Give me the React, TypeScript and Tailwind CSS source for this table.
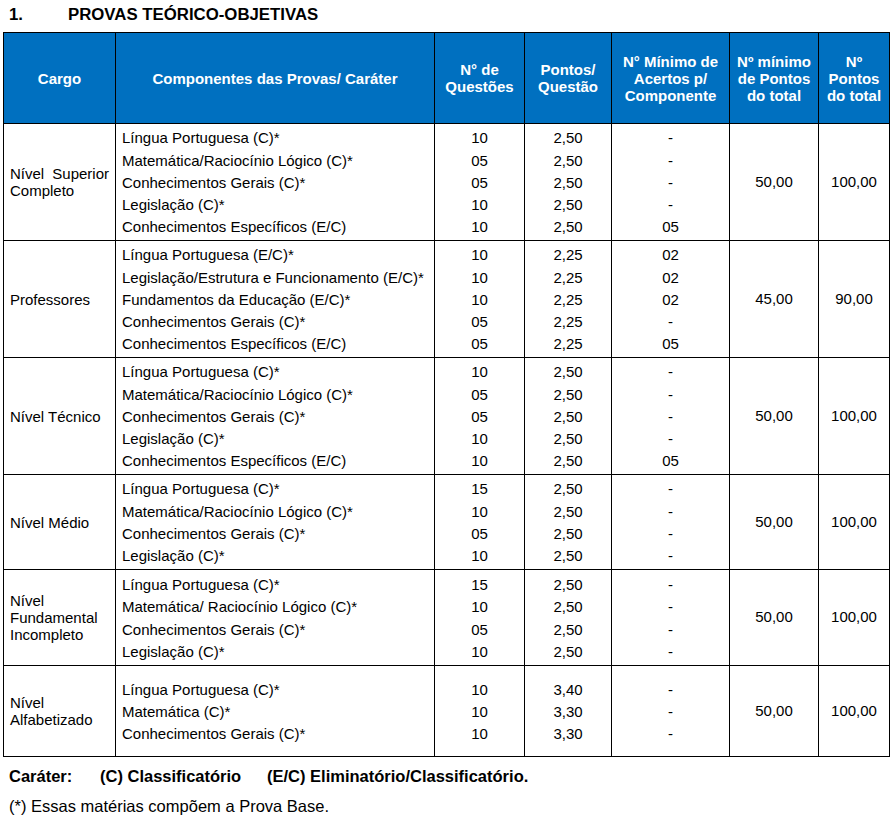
import React from 'react';

type Group = {
  cargo: string;
  justify?: boolean;
  h: string;
  items: [string, string, string, string][];
  min: string;
  total: string;
};

const groups: Group[] = [
  {
    cargo: 'Nível Superior Completo',
    justify: true,
    h: 'h-[117px]',
    items: [
      ['Língua Portuguesa (C)*', '10', '2,50', '-'],
      ['Matemática/Raciocínio Lógico (C)*', '05', '2,50', '-'],
      ['Conhecimentos Gerais (C)*', '05', '2,50', '-'],
      ['Legislação (C)*', '10', '2,50', '-'],
      ['Conhecimentos Específicos (E/C)', '10', '2,50', '05'],
    ],
    min: '50,00',
    total: '100,00',
  },
  {
    cargo: 'Professores',
    h: 'h-[117px]',
    items: [
      ['Língua Portuguesa (E/C)*', '10', '2,25', '02'],
      ['Legislação/Estrutura e Funcionamento (E/C)*', '10', '2,25', '02'],
      ['Fundamentos da Educação (E/C)*', '10', '2,25', '02'],
      ['Conhecimentos Gerais (C)*', '05', '2,25', '-'],
      ['Conhecimentos Específicos (E/C)', '05', '2,25', '05'],
    ],
    min: '45,00',
    total: '90,00',
  },
  {
    cargo: 'Nível Técnico',
    h: 'h-[117px]',
    items: [
      ['Língua Portuguesa (C)*', '10', '2,50', '-'],
      ['Matemática/Raciocínio Lógico (C)*', '05', '2,50', '-'],
      ['Conhecimentos Gerais (C)*', '05', '2,50', '-'],
      ['Legislação (C)*', '10', '2,50', '-'],
      ['Conhecimentos Específicos (E/C)', '10', '2,50', '05'],
    ],
    min: '50,00',
    total: '100,00',
  },
  {
    cargo: 'Nível Médio',
    h: 'h-[95px]',
    items: [
      ['Língua Portuguesa (C)*', '15', '2,50', '-'],
      ['Matemática/Raciocínio Lógico (C)*', '10', '2,50', '-'],
      ['Conhecimentos Gerais (C)*', '05', '2,50', '-'],
      ['Legislação (C)*', '10', '2,50', '-'],
    ],
    min: '50,00',
    total: '100,00',
  },
  {
    cargo: 'Nível Fundamental Incompleto',
    h: 'h-[96px]',
    items: [
      ['Língua Portuguesa (C)*', '15', '2,50', '-'],
      ['Matemática/ Raciocínio Lógico (C)*', '10', '2,50', '-'],
      ['Conhecimentos Gerais (C)*', '05', '2,50', '-'],
      ['Legislação (C)*', '10', '2,50', '-'],
    ],
    min: '50,00',
    total: '100,00',
  },
  {
    cargo: 'Nível Alfabetizado',
    h: 'h-[91px]',
    items: [
      ['Língua Portuguesa (C)*', '10', '3,40', '-'],
      ['Matemática (C)*', '10', '3,30', '-'],
      ['Conhecimentos Gerais (C)*', '10', '3,30', '-'],
    ],
    min: '50,00',
    total: '100,00',
  },
];

const th = 'border border-black bg-[#0070c0] text-white font-bold text-[15px] leading-[17px] text-center align-middle px-1';
const cell = 'border border-black align-middle text-[15px]';
const td = `${cell} leading-[22.3px]`;

export default function App() {
  return (
    <div className="w-[892px] h-[817px] bg-white text-black font-['Liberation_Sans',Arial,sans-serif]">
      {/* título */}
      <div className="flex items-center h-[28px] pt-[1px] pl-[9px] text-[16.8px] font-bold">
        <span className="w-[59px]">1.</span>
        <span>PROVAS TEÓRICO-OBJETIVAS</span>
      </div>

      <table className="ml-[3px] mt-[4px] table-fixed border-collapse w-[886px]">
        <colgroup>
          <col className="w-[112px]" />
          <col className="w-[319px]" />
          <col className="w-[90px]" />
          <col className="w-[87px]" />
          <col className="w-[118px]" />
          <col className="w-[89px]" />
          <col className="w-[71px]" />
        </colgroup>
        <thead>
          <tr className="h-[91px]">
            <th className={th}>Cargo</th>
            <th className={th}>Componentes das Provas/ Caráter</th>
            <th className={th}>N° de<br />Questões</th>
            <th className={th}>Pontos/<br />Questão</th>
            <th className={`${th} px-0`}>N° Mínimo de<br />Acertos p/<br />Componente</th>
            <th className={`${th} px-0`}>Nº mínimo<br />de Pontos<br />do total</th>
            <th className={`${th} px-0`}>Nº<br />Pontos<br />do total</th>
          </tr>
        </thead>
        <tbody>
          {groups.map((g) => (
            <tr key={g.cargo} className={g.h}>
              <td className={`${cell} px-[6px] leading-[17px] ${g.justify ? 'text-justify' : 'text-left'}`}>{g.cargo}</td>
              <td className={`${td} pl-[6px] pr-0 pt-[2px]`}>
                {g.items.map((it) => (
                  <div key={it[0]} className="whitespace-nowrap">{it[0]}</div>
                ))}
              </td>
              <td className={`${td} text-center pt-[2px]`}>
                {g.items.map((it, i) => (
                  <div key={i}>{it[1]}</div>
                ))}
              </td>
              <td className={`${td} text-center pt-[2px]`}>
                {g.items.map((it, i) => (
                  <div key={i}>{it[2]}</div>
                ))}
              </td>
              <td className={`${td} text-center pt-[2px]`}>
                {g.items.map((it, i) => (
                  <div key={i}>{it[3]}</div>
                ))}
              </td>
              <td className={`${td} text-center`}>{g.min}</td>
              <td className={`${td} text-center`}>{g.total}</td>
            </tr>
          ))}
        </tbody>
      </table>

      <div className="pl-[9px] pt-[10px] text-[16.5px] leading-[19px] font-bold flex whitespace-nowrap">
        <span className="w-[91px] shrink-0">Caráter:</span>
        <span className="w-[167px] shrink-0">(C) Classificatório</span>
        <span>(E/C) Eliminatório/Classificatório.</span>
      </div>
      <div className="pl-[9px] pt-[11px] text-[16.5px] leading-[19px]">(*) Essas matérias compõem a Prova Base.</div>
    </div>
  );
}
